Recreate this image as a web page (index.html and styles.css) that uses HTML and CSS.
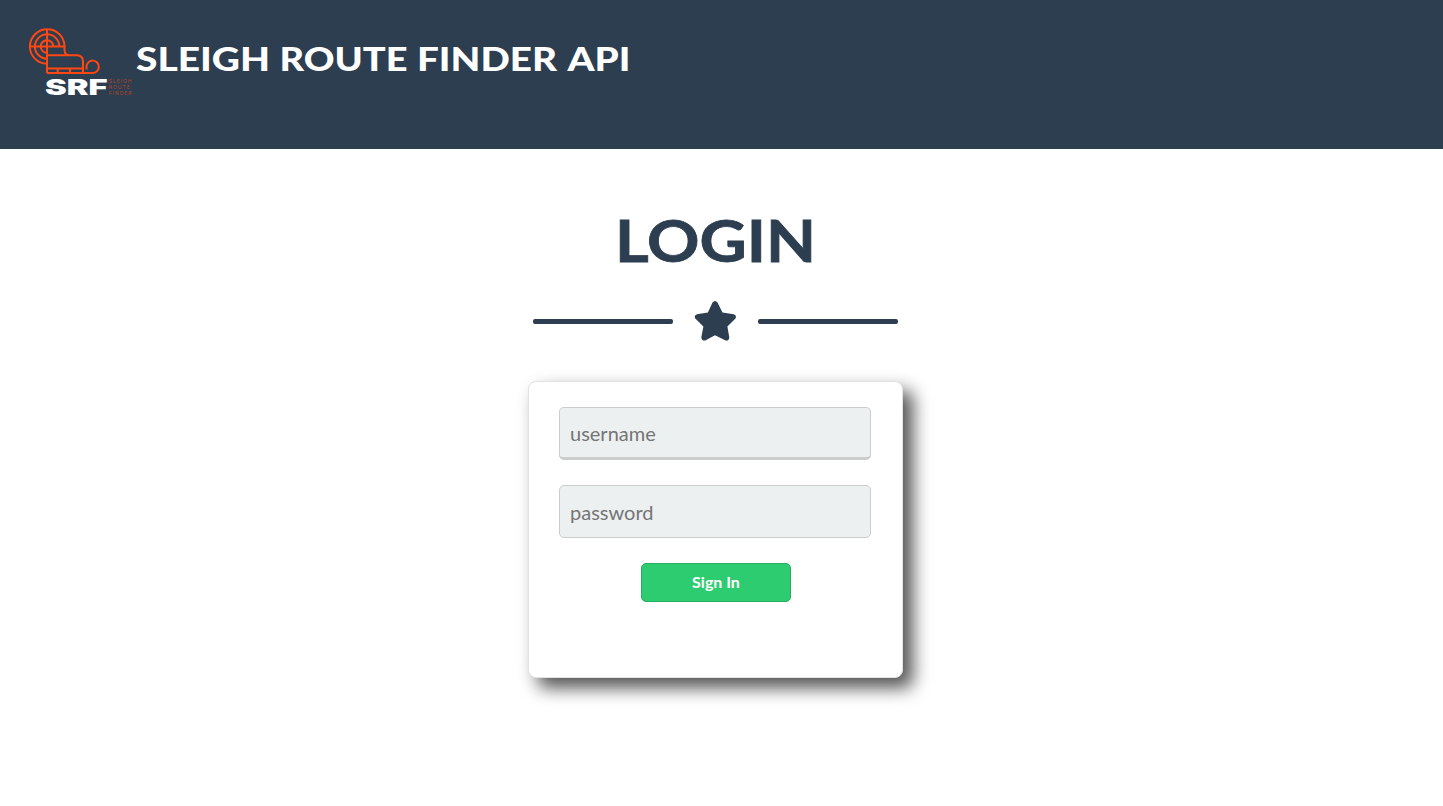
FILE: index.html
```
<!DOCTYPE html>
<html lang="en">
<head>
<meta charset="utf-8">
<title>Sleigh Route Finder API</title>
<link rel="stylesheet" href="styles.css">
</head>
<body>
<header class="masthead">
  <svg class="logo" viewBox="20 20 116 85" width="116" height="85" role="img" aria-label="SRF">
    <g class="logo-lines">
      <path d="M64.500 46.500a17.300 17.300 0 1 0-17.500 17.300M59.300 46.500a12.200 12.200 0 1 0-12.300 12.200M53.300 46.500a6.300 6.300 0 1 0-6.300 6.300"/>
      <path d="M29.500 46.500h35v3.500q.3 5.300 5 5.300h7.500q6 .3 6 6v11.500M47 29v44M47 55.300h25M47 68.500h36M57.700 68.500v4M70 68.500v4"/>
      <path d="M47 73h45.500a6.200 6.200 0 1 0-6-7v3.500"/>
    </g>
    <text class="logo-mark" x="45" y="95" textLength="62.500" lengthAdjust="spacingAndGlyphs">SRF</text>
    <g class="logo-caption">
      <text x="108.700" y="83.300" textLength="22.800" lengthAdjust="spacing">SLEIGH</text>
      <text x="108.700" y="89.100" textLength="21" lengthAdjust="spacing">ROUTE</text>
      <text x="108.700" y="94.900" textLength="22.800" lengthAdjust="spacing">FINDER</text>
    </g>
  </svg>
  <svg class="site-title" width="500" height="50" viewBox="136 34 500 50" role="heading" aria-level="1">
    <text x="136" y="71" textLength="134" lengthAdjust="spacingAndGlyphs">SLEIGH</text>
    <text x="279.500" y="71" textLength="128" lengthAdjust="spacingAndGlyphs">ROUTE</text>
    <text x="417" y="71" textLength="140" lengthAdjust="spacingAndGlyphs">FINDER</text>
    <text x="567.500" y="71" textLength="63" lengthAdjust="spacingAndGlyphs">API</text>
  </svg>
</header>
<main class="login">
  <svg class="login-title" width="220" height="70" viewBox="605.500 205 220 70" role="heading" aria-level="2">
    <text x="614.500" y="262" textLength="201" lengthAdjust="spacingAndGlyphs">LOGIN</text>
  </svg>
  <div class="divider">
    <span class="divider-line"></span>
    <svg class="star" width="43" height="42" viewBox="0 0.300 43 42"><path d="M18.500 2.800Q21 -.2 23.500 2.800L28.500 12.800 39.700 14.500Q43 15.800 41.500 18.900L33.400 26.900 35.300 37.800Q35 41.400 31.600 40.800L21 35.500 11.300 40.800Q7.800 41.500 7.300 37.800L9.400 26.900 1.300 18.900Q-.4 15.700 3 14.500L13.900 12.800Z"/></svg>
    <span class="divider-line"></span>
  </div>
  <form class="card">
    <input class="field field-user" type="text" placeholder="username">
    <input class="field" type="password" placeholder="password">
    <button class="submit" type="button">Sign In</button>
  </form>
</main>
</body>
</html>
```
FILE: styles.css
```
* { box-sizing: border-box; }
body {
  margin: 0;
  min-height: 806px;
  background: #fff;
  color: #2c3e50;
  font-family: Lato, sans-serif;
}
.masthead {
  height: 149px;
  padding: 20px 20px 0;
  display: flex;
  align-items: flex-start;
  background: #2c3e50;
}
.logo { flex: none; }
.logo-lines { fill: none; stroke: #ff4713; stroke-width: 2; }
.logo-mark { fill: #fff; font: 900 21.500px Inter, sans-serif; }
.logo-caption { fill: #b5432b; font: 400 5px Inter, sans-serif; }
.site-title {
  margin-top: 14px;
  fill: #fff;
  font: 900 33px Lato, sans-serif;
}
.login {
  width: 375px;
  margin: 0 0 0 528px;
  padding: 56px 0 128px;
  display: flex;
  flex-direction: column;
  align-items: center;
}
.login-title {
  fill: #2c3e50;
  stroke: #2c3e50;
  stroke-width: .8px;
  font: 700 58px Lato, sans-serif;
}
.divider {
  width: 365px;
  height: 42px;
  margin: 25px 0 39px;
  display: flex;
  align-items: center;
  justify-content: space-between;
}
.divider-line { width: 140px; height: 5px; border-radius: 2px; background: #2c3e50; }
.star { fill: #2c3e50; }
.card {
  width: 375px;
  height: 297px;
  padding: 25px 31px 0 30px;
  display: flex;
  flex-direction: column;
  align-items: center;
  background: #fff;
  border: 1px solid #e2e2e2;
  border-radius: 8px;
  box-shadow: 10px 10px 17px rgba(0, 0, 0, .65), 5px 5px 24px rgba(0, 0, 0, .05);
}
.field {
  width: 312px;
  height: 53px;
  margin: 0 0 25px;
  padding: 0 10px;
  border: 1px solid #ccc;
  border-radius: 5px;
  background: #ecf0f1;
  font: 400 20px Lato, sans-serif;
}
.field::placeholder { color: #757575; opacity: 1; }
.field-user { border-bottom-width: 3px; }
.submit {
  width: 150px;
  height: 39px;
  margin-left: 2px;
  padding: 0 0 2px;
  border: 1px solid #27ae60;
  border-radius: 5px;
  background: #2ecc71;
  color: #fff;
  font: 700 16px Lato, sans-serif;
}
```
